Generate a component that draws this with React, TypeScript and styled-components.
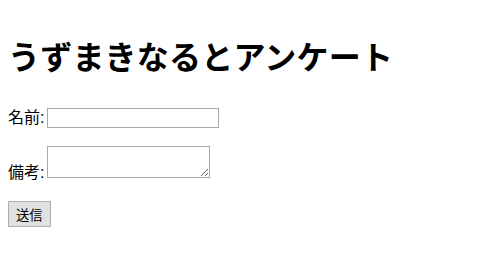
import React from "react";
import styled, { createGlobalStyle } from "styled-components";

const GlobalStyle = createGlobalStyle`
  body {
    margin: 8px;
    background: #fff;
    color: #000;
    font-family: "Liberation Sans", "Noto Sans CJK JP", sans-serif;
    font-size: 16px;
  }
`;

const Title = styled.h1`
  font-size: 32px;
  font-weight: bold;
  margin: 26px 0 24px;
  line-height: 48px;
  letter-spacing: 0.2px;
`;

const Form = styled.form``;

const Row = styled.p`
  margin: 16px 0;
  line-height: 24px;
`;

const Label = styled.span`
  margin-right: 3px;
`;

const TextInput = styled.input`
  width: 172px;
  height: 20px;
  box-sizing: border-box;
  border: 1px solid #a9a9a9;
  padding: 1px 2px;
  font: inherit;
  vertical-align: baseline;
`;

const TextArea = styled.textarea`
  width: 163px;
  height: 32px;
  box-sizing: border-box;
  border: 1px solid #a9a9a9;
  padding: 2px;
  font: inherit;
  vertical-align: baseline;
`;

const Submit = styled.button`
  height: 26px;
  padding: 1px 7px;
  font-family: "Liberation Sans", "Noto Sans CJK JP", sans-serif;
  font-size: 13.33px;
  border: 1px solid #adadad;
  background: #e1e1e1;
  color: #000;
  border-radius: 0;
`;

export default function App() {
  return (
    <>
      <GlobalStyle />
      <Title>うずまきなるとアンケート</Title>
      <Form onSubmit={(e) => e.preventDefault()}>
        <Row>
          <Label>名前:</Label>
          <TextInput type="text" />
        </Row>
        <Row>
          <Label>備考:</Label>
          <TextArea />
        </Row>
        <Row>
          <Submit type="submit">送信</Submit>
        </Row>
      </Form>
    </>
  );
}
